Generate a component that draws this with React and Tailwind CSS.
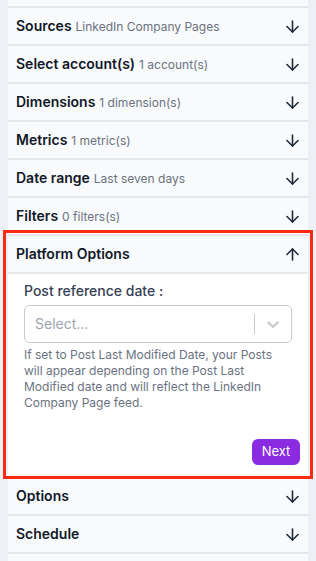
import { ArrowDown, ArrowUp } from "lucide-react";

const rowsBefore = [
  { title: "Sources", sub: "LinkedIn Company Pages" },
  { title: "Select account(s)", sub: "1 account(s)" },
  { title: "Dimensions", sub: "1 dimension(s)" },
  { title: "Metrics", sub: "1 metric(s)" },
  { title: "Date range", sub: "Last seven days" },
  { title: "Filters", sub: "0 filters(s)" },
];

const rowsAfter = [{ title: "Options" }, { title: "Schedule" }];

const Row = ({ title, sub, open }) => (
  <div className="flex h-[36px] items-center justify-between bg-[#f9fafb] pl-2 pr-1.5 border-b-2 border-[#e5e7eb] box-content">
    <div className="flex items-baseline gap-1 truncate">
      <span className="text-sm font-semibold text-gray-900">{title}</span>
      {sub && <span className="text-xs text-gray-500">{sub}</span>}
    </div>
    {open ? (
      <ArrowUp size={19} strokeWidth={2} className="text-gray-800" />
    ) : (
      <ArrowDown size={19} strokeWidth={2} className="text-gray-800" />
    )}
  </div>
);

const App = () => {
  return (
    <div
      className="min-h-screen overflow-hidden bg-[#eef0f6] px-2"
      style={{ fontFamily: "Inter, 'Noto Sans', sans-serif" }}
    >
      <div className="flex flex-col">
        {/* tail of the section scrolled above */}
        <div className="h-[6px] border-b-2 border-[#e5e7eb] bg-[#f9fafb] box-content" />
        {rowsBefore.map((r) => (
          <Row key={r.title} {...r} />
        ))}

        {/* Platform options (highlighted) */}
        <div className="relative border-b-2 border-[#e5e7eb]">
          <Row title="Platform Options" open />
          <div className="bg-white px-4 pt-[7px] pb-[11px]">
            <label className="block text-sm font-medium text-gray-700">
              Post reference date :
            </label>
            <div className="mt-1 flex h-[38px] items-center rounded-[5px] border border-[#cccccc] bg-white">
              <span className="flex-1 pl-[10px] text-sm text-[#9ca3af]">Select...</span>
              <span className="h-5 w-px bg-[#cccccc]" />
              <span className="px-2 text-[#cccccc]">
                <svg width="20" height="20" viewBox="0 0 20 20" fill="currentColor">
                  <path d="M4.516 7.548c0.436-0.446 1.043-0.481 1.576 0l3.908 3.747 3.908-3.747c0.533-0.481 1.141-0.446 1.574 0 0.436 0.445 0.408 1.197 0 1.615-0.406 0.418-4.695 4.502-4.695 4.502-0.217 0.223-0.502 0.335-0.787 0.335s-0.57-0.112-0.789-0.335c0 0-4.287-4.084-4.695-4.502s-0.436-1.17 0-1.615z" />
                </svg>
              </span>
            </div>
            <p className="mt-1 text-xs leading-4 text-gray-500">
              If set to Post Last Modified Date, your Posts will appear depending on the Post Last
              Modified date and will reflect the LinkedIn Company Page feed.
            </p>
            <div className="mt-7 flex justify-end">
              <button className="-mr-2 h-[26px] w-12 rounded-md bg-[#8a2be2] text-[13px] text-white">
                Next
              </button>
            </div>
          </div>
          <div className="pointer-events-none absolute -left-[5px] -right-[5px] -top-[6px] -bottom-[3px] border-[3px] border-[#fc2a12]" />
        </div>

        {rowsAfter.map((r) => (
          <Row key={r.title} {...r} />
        ))}
        <div className="h-8 bg-[#f9fafb]" />
      </div>
    </div>
  );
};

export default App;
